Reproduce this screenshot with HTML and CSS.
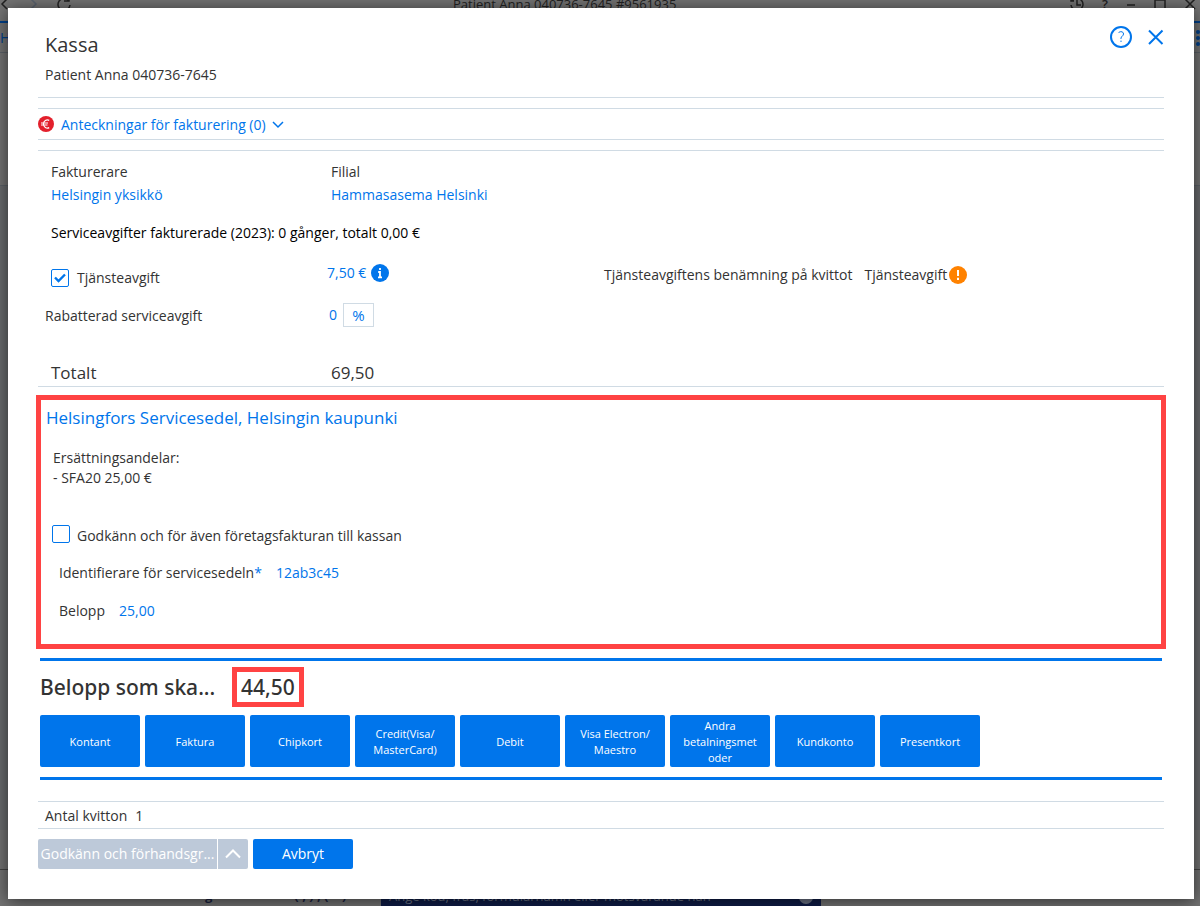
FILE: index.html
```
<!DOCTYPE html>
<html lang="sv">
<head>
    <meta charset="UTF-8">
    <meta name="viewport" content="width=device-width, initial-scale=1.0">
    <title>Kassa</title>
    <link rel="stylesheet" href="styles.css">
</head>
<body>
    <div class="app" aria-hidden="true">
        <div class="titlebar">
            <div class="nav-icons">
                <svg width="10" height="16" viewBox="0 0 10 16"><path d="M7 3 L2 8 L7 13"/></svg>
                <svg class="muted" width="10" height="16" viewBox="0 0 10 16"><path d="M3 3 L8 8 L3 13"/></svg>
                <svg width="16" height="16" viewBox="0 0 16 16"><path d="M12.5 4.5 A6 6 0 1 0 14 9 M13 0 V5 H8"/></svg>
            </div>
            <div class="window-title">Patient Anna 040736-7645 #9561935</div>
            <div class="window-icons">
                <svg width="14" height="16" viewBox="0 0 14 16"><path d="M2 5 A6 6 0 1 1 1 9 M1 2 V5 H4 M7 4 V9 H11"/></svg>
                <span>?</span>
                <svg width="10" height="16" viewBox="0 0 10 16"><path d="M1 9 H9"/></svg>
                <svg width="12" height="16" viewBox="0 0 12 16"><path d="M1 4 H11 V14 H1 Z"/></svg>
                <svg width="12" height="16" viewBox="0 0 12 16"><path d="M1 3 L11 13 M11 3 L1 13"/></svg>
            </div>
        </div>
        <div class="menubar">
            <span>H</span>
            <svg width="4" height="18" viewBox="0 0 4 18"><circle cx="2" cy="3" r="2"/><circle cx="2" cy="9" r="2"/><circle cx="2" cy="15" r="2"/></svg>
        </div>
        <div class="app-top"></div>
        <div class="app-main"></div>
        <div class="app-bar"></div>
        <div class="app-footer">
            <div class="footer-text"><span>g</span><span>( , ) , (&nbsp; &nbsp; )</span></div>
            <div class="search-hint">
                <span>Ange kod, fras, formulärnamn eller motsvarande nan</span>
                <span class="hint-dot"></span>
            </div>
        </div>
    </div>

    <main class="dialog" role="dialog" aria-labelledby="title">
        <header class="header">
            <div>
                <h1 id="title">Kassa</h1>
                <p>Patient Anna 040736-7645</p>
            </div>
            <div class="header-buttons">
                <button class="icon-btn" aria-label="Hjälp">
                    <svg width="24" height="24" viewBox="0 0 24 24"><circle cx="12" cy="12" r="10"/><path class="thin" d="M9.5 8 C10 7 11 6.7 12 6.7 C13.5 6.7 14.5 7.5 14.5 9 C14.5 11 12 11.2 12 13.2 V14 M12 15.6 V17"/></svg>
                </button>
                <button class="icon-btn" aria-label="Stäng">
                    <svg width="24" height="24" viewBox="0 0 24 24"><path d="M5 5.5 L18.5 19 M18.5 5.5 L5 19"/></svg>
                </button>
            </div>
        </header>

        <section class="notes">
            <svg width="16" height="16" viewBox="0 0 16 16"><circle cx="8" cy="8" r="8" fill="#e3202c"/><path d="M11.2 4.4 A4 4 0 1 0 11.2 11.6 M3 7 H10 M3 9 H9.5" fill="none" stroke="#fff" stroke-width="1.2"/></svg>
            <button class="link-btn">Anteckningar för fakturering (0)
                <svg width="12" height="8" viewBox="0 0 12 8"><path d="M1 1 L6 6 L11 1"/></svg>
            </button>
        </section>

        <section class="billing">
            <div class="columns">
                <div class="field">
                    <span>Fakturerare</span>
                    <a href="#">Helsingin yksikkö</a>
                </div>
                <div class="field">
                    <span>Filial</span>
                    <a href="#">Hammasasema Helsinki</a>
                </div>
            </div>
            <p class="summary">Serviceavgifter fakturerade (2023): 0 gånger, totalt 0,00 €</p>
            <div class="columns fee">
                <label class="check"><input type="checkbox" checked>Tjänsteavgift</label>
                <div class="price">
                    <input type="text" class="value" value="7,50 €" aria-label="Tjänsteavgift belopp">
                    <svg width="18" height="18" viewBox="0 0 18 18"><circle cx="9" cy="9" r="9" fill="#0075eb"/><path d="M9 4 V6 M7.2 8 H9 V13 M7 13.3 H11" fill="none" stroke="#fff" stroke-width="1.8"/></svg>
                </div>
                <div class="receipt-name">
                    <span>Tjänsteavgiftens benämning på kvittot</span>
                    <span class="receipt-value">Tjänsteavgift
                        <svg width="18" height="18" viewBox="0 0 18 18"><circle cx="9" cy="9" r="9" fill="#ff8200"/><path d="M9 4 V10 M9 11.8 V14" fill="none" stroke="#fff" stroke-width="2"/></svg>
                    </span>
                </div>
            </div>
            <div class="columns discount">
                <label for="discount">Rabatterad serviceavgift</label>
                <div class="percent">
                    <input type="text" id="discount" class="value" value="0">
                    <button class="unit">%</button>
                </div>
            </div>
            <div class="columns total">
                <span>Totalt</span>
                <span>69,50</span>
            </div>
        </section>

        <section class="voucher">
            <h2>Helsingfors Servicesedel, Helsingin kaupunki</h2>
            <p class="shares">Ersättningsandelar:<br>- SFA20 25,00 €</p>
            <label class="check"><input type="checkbox">Godkänn och för även företagsfakturan till kassan</label>
            <div class="row">
                <label for="voucher-id">Identifierare för servicesedeln<span class="required">*</span></label>
                <input type="text" id="voucher-id" class="value" value="12ab3c45">
            </div>
            <div class="row">
                <label for="amount">Belopp</label>
                <input type="text" id="amount" class="value" value="25,00">
            </div>
        </section>

        <section class="payment">
            <div class="due">
                <span>Belopp som ska...</span>
                <strong>44,50</strong>
            </div>
            <div class="methods">
                <button>Kontant</button>
                <button>Faktura</button>
                <button>Chipkort</button>
                <button>Credit(Visa/<br>MasterCard)</button>
                <button>Debit</button>
                <button>Visa Electron/<br>Maestro</button>
                <button>Andra betalningsmet<wbr>oder</button>
                <button>Kundkonto</button>
                <button>Presentkort</button>
            </div>
        </section>

        <section class="receipts">
            <label for="receipts">Antal kvitton</label>
            <input type="text" id="receipts" class="value" value="1">
        </section>

        <footer class="actions">
            <div class="split">
                <button disabled>Godkänn och förhandsgr...</button>
                <button class="arrow" aria-label="Fler val" disabled>
                    <svg width="16" height="10" viewBox="0 0 16 10"><path d="M1 8.5 L8 1.5 L15 8.5"/></svg>
                </button>
            </div>
            <button class="cancel">Avbryt</button>
        </footer>
    </main>
</body>
</html>
```
FILE: styles.css
```
* {
    box-sizing: border-box;
}
body {
    margin: 0;
    font-family: "Open Sans", "Noto Sans", sans-serif;
    font-size: 14px;
    line-height: 20px;
    color: #333;
    overflow: hidden;
}
h1, h2, p {
    margin: 0;
    font-weight: normal;
}
button, input {
    font: inherit;
    color: inherit;
    margin: 0;
    padding: 0;
    border: 0;
    background: none;
}
button {
    cursor: pointer;
}
svg {
    display: block;
    flex: none;
}
a {
    color: #0075eb;
    text-decoration: none;
}

/* dimmed application behind the dialog */
.app {
    display: flex;
    flex-direction: column;
    height: 100vh;
    background: #737373;
    color: #222;
}
.app svg {
    fill: none;
    stroke: #222;
    stroke-width: 1.5;
}
.app .muted {
    stroke: #59626e;
}
.titlebar {
    display: grid;
    grid-template-columns: 453px 1fr auto;
    height: 23px;
    padding-right: 4px;
    font-size: 13px;
    line-height: 8px;
    border-bottom: 2px solid #00408a;
}
.nav-icons {
    display: flex;
    gap: 18px;
    margin-top: -4px;
}
.window-icons {
    display: flex;
    gap: 18px;
    margin-top: -4px;
    font-weight: 600;
    line-height: 16px;
}
.menubar {
    display: flex;
    justify-content: space-between;
    align-items: center;
    height: 30px;
    color: #00408a;
    border-bottom: 1px solid #5c6268;
}
.menubar svg {
    fill: #00408a;
    stroke: none;
}
.app-top {
    height: 132px;
}
.app-main {
    flex: 1;
    background: #696b6e;
    border-top: 1px solid #5c6268;
}
.app-bar {
    height: 40px;
    border-bottom: 1px solid #444;
}
.app-footer {
    display: flex;
    height: 36px;
    align-items: flex-end;
    font-size: 13px;
}
.footer-text {
    display: flex;
    gap: 82px;
    width: 381px;
    padding-left: 205px;
    font-weight: bold;
    line-height: 22px;
    color: #1c2340;
}
.search-hint {
    display: flex;
    justify-content: space-between;
    width: 440px;
    height: 36px;
    padding: 16px 8px 0;
    background: #0f1c47;
    color: #6c7486;
    line-height: 20px;
}
.hint-dot {
    width: 14px;
    height: 18px;
    border-radius: 7px;
    background: #6c7486;
}

/* dialog */
.dialog {
    position: absolute;
    inset: 8px 6px 7px 8px;
    padding: 0 30px;
    background: #fff;
    box-shadow: 0 2px 16px rgba(0,0,0,0.6);
}
.header {
    display: flex;
    justify-content: space-between;
    height: 90px;
    padding: 23px 0 0 7px;
    border-bottom: 1px solid #d0dbe4;
}
.header h1 {
    font-size: 20px;
    line-height: 28px;
    margin-bottom: 6px;
}
.header-buttons {
    display: flex;
    gap: 11px;
    align-self: flex-start;
    margin: -6px -4px 0 0;
}
.icon-btn svg, .link-btn svg {
    fill: none;
    stroke: #0075eb;
    stroke-width: 2;
}
.icon-btn .thin {
    stroke-width: 1;
}
.notes {
    display: flex;
    align-items: center;
    gap: 7px;
    height: 32px;
    margin: 10px 0;
    border-top: 1px solid #d0dbe4;
    border-bottom: 1px solid #d0dbe4;
}
.link-btn {
    display: flex;
    align-items: center;
    gap: 6px;
    padding-top: 2px;
    color: #0075eb;
}
.link-btn svg {
    stroke-width: 1.5;
}
.billing {
    padding: 11px 0 1px 13px;
    border-top: 1px solid #d0dbe4;
    border-bottom: 1px solid #d0dbe4;
}
.columns {
    display: grid;
    grid-template-columns: 280px 273px 1fr;
    align-items: center;
}
.field {
    display: grid;
    gap: 3px;
}
.summary {
    margin: 18px 0;
    color: #000;
}
.fee {
    height: 34px;
}
.check {
    display: flex;
    align-items: center;
    gap: 8px;
}
.check input {
    appearance: none;
    width: 18px;
    height: 18px;
    border: 1px solid #0075eb;
    border-radius: 2px;
}
.check input:checked {
    background: url("data:image/svg+xml,%3Csvg xmlns='http://www.w3.org/2000/svg' viewBox='0 0 16 16'%3E%3Cpath d='M3 7.5 L6.5 11 L13 4.5' fill='none' stroke='%230075eb' stroke-width='2.4'/%3E%3C/svg%3E");
}
.value {
    color: #0075eb;
}
.price, .percent {
    display: flex;
    align-items: center;
    margin-left: -4px;
}
.price {
    margin-bottom: 10px;
}
.price .value {
    width: 44px;
}
.receipt-name, .receipt-value {
    display: flex;
    align-items: center;
}
.receipt-name {
    gap: 12px;
    margin-bottom: 6px;
}
.receipt-value {
    gap: 2px;
}
.discount {
    margin: 8px 0 34px;
}
.discount label {
    margin-left: -6px;
    padding-top: 2px;
}
.percent {
    margin-left: -2px;
}
.percent .value {
    width: 14px;
}
.unit {
    width: 31px;
    height: 24px;
    border: 1px solid #d0dbe4;
    color: #0075eb;
    font-size: 15px;
}
.total {
    font-size: 17px;
    line-height: 24px;
}

.voucher {
    margin: 8px -2px 9px;
    padding: 6px 5px 23px;
    border: 5px solid #ff4343;
}
.voucher h2 {
    font-size: 17px;
    line-height: 24px;
    color: #0075eb;
}
.shares {
    margin: 18px 0 37px 7px;
}
.voucher .check {
    align-items: flex-start;
    margin: 0 0 17px 6px;
    gap: 7px;
    line-height: 21px;
}
.row {
    display: flex;
    gap: 14px;
    margin: 0 0 18px 13px;
}
.row:last-child {
    margin-bottom: 0;
}
.row .value {
    width: 200px;
}
.required {
    color: #0075eb;
}

.payment {
    margin: 0 2px 21px;
    padding: 6px 0 10px;
    border-top: 3px solid #0075eb;
    border-bottom: 3px solid #0075eb;
}
.due {
    display: flex;
    align-items: center;
    gap: 16px;
    margin-bottom: 8px;
    font-family: "Noto Sans", "Open Sans", sans-serif;
    font-size: 21px;
    font-weight: 500;
}
.due span {
    width: 176px;
    white-space: nowrap;
}
.due strong {
    padding: 0 4px;
    border: 5px solid #ff4343;
    line-height: 30px;
    font-weight: 500;
}
.methods {
    display: flex;
    flex-wrap: wrap;
    gap: 5px;
}
.methods button {
    width: 100px;
    height: 52px;
    padding: 1px 6px 0;
    border-radius: 2px;
    background: #0075eb;
    color: #fff;
    font-size: 11px;
    line-height: 16px;
}
.receipts {
    display: flex;
    gap: 8px;
    padding: 4px 7px 2px;
    border-top: 1px solid #d0dbe4;
    border-bottom: 1px solid #d0dbe4;
}
.receipts .value {
    width: 40px;
    color: #333;
}
.actions {
    display: flex;
    gap: 5px;
    margin-top: 10px;
    line-height: 30px;
}
.actions button {
    height: 30px;
    background: #0075eb;
    color: #fff;
}
.split {
    display: flex;
    gap: 1px;
}
.split button {
    width: 179px;
    background: #bdc9d9;
    border-radius: 2px 0 0 2px;
    white-space: nowrap;
}
.split .arrow {
    display: flex;
    align-items: center;
    justify-content: center;
    width: 30px;
    border-radius: 0 2px 2px 0;
}
.arrow svg {
    fill: none;
    stroke: #fff;
    stroke-width: 2;
}
.cancel {
    width: 100px;
    border-radius: 2px;
}
```
